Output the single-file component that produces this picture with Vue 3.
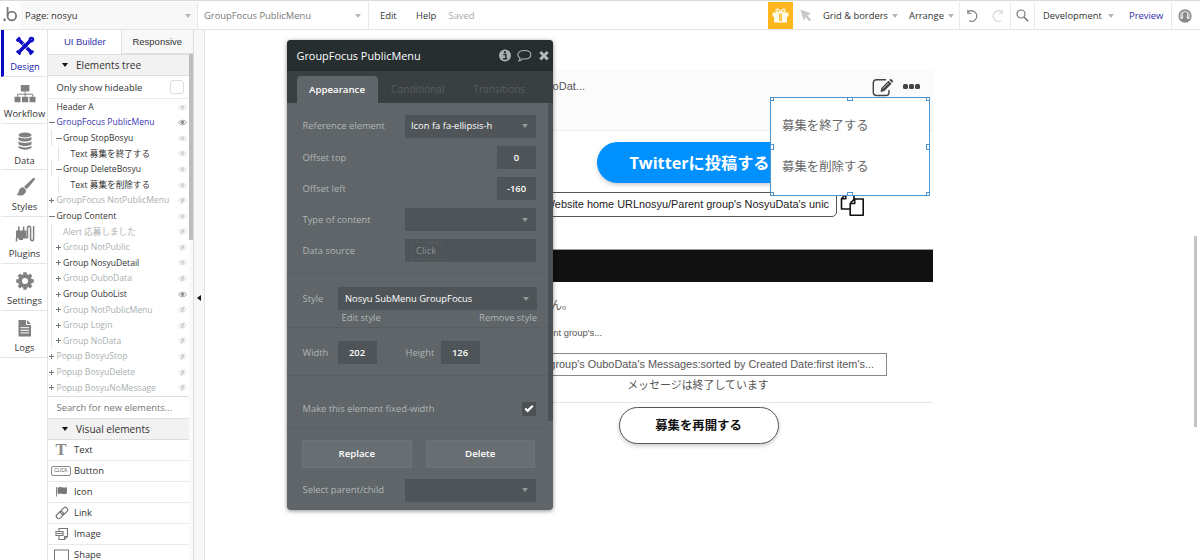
<script setup>
import { ref } from 'vue';

const navItems = ['Design', 'Workflow', 'Data', 'Styles', 'Plugins', 'Settings', 'Logs'];
const activeNav = ref('Design');

// level: indentation, mark: expand state, eye: on / dim / off
const tree = [
  { text: 'Header A', level: 0, mark: '', eye: 'dim', tone: 'dark' },
  { text: 'GroupFocus PublicMenu', level: 0, mark: 'minus', eye: 'on', tone: 'selected' },
  { text: 'Group StopBosyu', level: 1, mark: 'minus', eye: 'dim', tone: 'dark' },
  { text: 'Text 募集を終了する', level: 2, mark: '', eye: 'dim', tone: 'dark' },
  { text: 'Group DeleteBosyu', level: 1, mark: 'minus', eye: 'dim', tone: 'dark' },
  { text: 'Text 募集を削除する', level: 2, mark: '', eye: 'dim', tone: 'dark' },
  { text: 'GroupFocus NotPublicMenu', level: 0, mark: 'plus', eye: 'off', tone: 'muted' },
  { text: 'Group Content', level: 0, mark: 'minus', eye: 'dim', tone: 'dark' },
  { text: 'Alert 応募しました', level: 1, mark: '', eye: 'off', tone: 'muted' },
  { text: 'Group NotPublic', level: 1, mark: 'plus', eye: 'off', tone: 'muted' },
  { text: 'Group NosyuDetail', level: 1, mark: 'plus', eye: 'dim', tone: 'dark' },
  { text: 'Group OuboData', level: 1, mark: 'plus', eye: 'off', tone: 'muted' },
  { text: 'Group OuboList', level: 1, mark: 'plus', eye: 'on', tone: 'dark' },
  { text: 'Group NotPublicMenu', level: 1, mark: 'plus', eye: 'off', tone: 'muted' },
  { text: 'Group Login', level: 1, mark: 'plus', eye: 'off', tone: 'muted' },
  { text: 'Group NoData', level: 1, mark: 'plus', eye: 'off', tone: 'muted' },
  { text: 'Popup BosyuStop', level: 0, mark: 'plus', eye: 'off', tone: 'muted' },
  { text: 'Popup BosyuDelete', level: 0, mark: 'plus', eye: 'off', tone: 'muted' },
  { text: 'Popup BosyuNoMessage', level: 0, mark: 'plus', eye: 'off', tone: 'muted' }
];

const visuals = ['Text', 'Button', 'Icon', 'Link', 'Image', 'Shape'];
const handles = ['tl', 'tc', 'tr', 'ml', 'mr', 'bl', 'bc', 'br'];
const fixedWidth = ref(true);
</script>

<template>
  <div class="editor">
    <header class="topbar">
      <div class="logo">
        <svg width="20" height="27" viewBox="0 0 20 27">
          <circle cx="4.6" cy="17.800" r="1.400" fill="#777" />
          <path d="M7.600 5v9" stroke="#777" stroke-width="1.700" fill="none" />
          <circle cx="11.800" cy="14" r="4.300" stroke="#777" stroke-width="1.800" fill="none" />
        </svg>
      </div>
      <div class="page-select">Page: nosyu<i class="caret"></i></div>
      <div class="element-select">GroupFocus PublicMenu<i class="caret"></i></div>
      <nav class="menu">
        <span class="edit">Edit</span>
        <span class="help">Help</span>
        <span class="saved">Saved</span>
      </nav>
      <div class="gift">
        <svg width="17" height="16" viewBox="0 0 17 16" fill="#fffbe8">
          <path d="M.5 4.500h16v4h-16zM2 8.500h13V14.500H2z" />
          <path d="M8.500 4.500C5 4.500 3.700 3.600 4 2.200 4.500.4 7 .5 8.500 4.500 10 .5 12.500.4 13 2.200c.3 1.400-1 2.300-4.500 2.300z" fill="none" stroke="#fffbe8" stroke-width="1.300" />
          <path d="M7.200 5.500h2.600v7.500H7.200z" fill="#fdb61c" />
          <path d="M8.100 6h.8v6.500h-.8z" opacity=".5" />
        </svg>
      </div>
      <div class="pointer">
        <svg width="12" height="13" viewBox="0 0 12 13"><path d="M.5.5l10.500 4-3.800 1.900 4 4.300-1.700 1.700-4.100-4.200L3.700 12z" fill="#c8c8c8" /></svg>
      </div>
      <div class="dropdown grid-menu">Grid &amp; borders<i class="caret"></i></div>
      <div class="dropdown arrange-menu">Arrange<i class="caret"></i></div>
      <div class="history">
        <svg width="14" height="14" viewBox="0 0 14 14"><path d="M3.400 2.700A5.300 5.300 0 1 1 4 11.800M2.800.8v3.400h3.400" fill="none" stroke="#777" stroke-width="1.100" /></svg>
        <svg width="14" height="14" viewBox="0 0 14 14"><path d="M10.600 2.700A5.300 5.300 0 1 0 10 11.800M11.200.8v3.400H7.800" fill="none" stroke="#d3d3d3" stroke-width="1.100" /></svg>
      </div>
      <div class="search">
        <svg width="13" height="13" viewBox="0 0 13 13" fill="none" stroke="#777"><circle cx="5" cy="5" r="4" stroke-width="1.200" /><path d="M8 8l4.200 4.200" stroke-width="1.600" /></svg>
      </div>
      <div class="dropdown dev-menu">Development<i class="caret"></i></div>
      <div class="preview">Preview</div>
      <div class="user">
        <svg width="14" height="14" viewBox="0 0 14 14"><circle cx="7" cy="7" r="6" fill="#fff" stroke="#888" stroke-width="1.300" /><path d="M2.300 11.300c.4-2 3.300-1.700 3.300-2.800C4.400 7.400 4 3 7 3s2.600 4.400 1.400 5.500c0 1.100 2.900.8 3.300 2.800C9 13.700 5 13.700 2.300 11.300z" fill="#888" /><path d="M2 9.500C0 3 4 1 7 1s7 2 5 8.500C11 8.300 9.700 8.500 9.300 8 10.500 6 10 2.500 7 2.500S3.500 6 4.700 8C4.300 8.500 3 8.300 2 9.500z" fill="#888" opacity=".55" /></svg>
      </div>
    </header>

    <div class="workspace">
      <aside class="nav">
        <div v-for="item in navItems" :key="item" class="nav-item" :class="{ active: item === activeNav }" @click="activeNav = item">
          <svg width="22" height="22" viewBox="0 0 22 22">
            <g v-if="item === 'Design'" stroke="#0d0dc8" fill="none">
              <path d="M4.500 4.500l13 13M17.500 4.500l-13 13" stroke-width="3.400" />
              <path d="M2.500 6L6 2.500M2.800 15.800l3.600 3.600M15.800 19.300l3.500-3.500" stroke-width="2.600" />
              <circle cx="17.400" cy="4.600" r="1.700" stroke-width="2.200" />
              <path d="M7.800 10.500l2.500-2.500M11.700 13.800l2.500-2.500" stroke="#fff" stroke-width=".9" />
            </g>
            <g v-else-if="item === 'Workflow'" fill="#808080">
              <path d="M6.800 2h8.600v6.500H6.800zM.500 13.700h6v5.600h-6zM8 13.700h6.200v5.600H8zM15.500 13.700h6v5.600h-6z" />
              <path d="M11.100 8.500v5M3.700 13.700v-2.500h15v2.500" fill="none" stroke="#808080" />
            </g>
            <g v-else-if="item === 'Data'" fill="#808080">
              <ellipse cx="11" cy="5" rx="6.500" ry="2.600" />
              <path d="M4.500 6.800c2 2.100 11 2.100 13 0v3c-2 2.400-11 2.400-13 0zM4.500 11.300c2 2.100 11 2.100 13 0v3c-2 2.400-11 2.400-13 0zM4.500 15.800c2 2.100 11 2.100 13 0v1.800c-2 2.800-11 2.800-13 0z" />
            </g>
            <g v-else-if="item === 'Styles'" fill="#808080">
              <path d="M20.500 2c1 .8.300 2-3.800 6.700l-4.200 4.500-2.500-2.500 4.700-4.500C18.500 2.800 19.700 1.400 20.500 2z" />
              <path d="M9.300 11.300l2.700 2.600c0 4.400-3.300 6.600-9.800 5.200 2.700-1.200 2-3.600 3.600-6 .9-1.300 2.300-1.900 3.500-1.800z" />
            </g>
            <g v-else-if="item === 'Plugins'" fill="#808080">
              <path d="M2 7.500h10.500v8H9V17H5v-1.500H2zM4 3.500h1.600V8H4zM8.800 3.500h1.600V8H8.800z" />
              <path d="M2.500 18.500V15M12 14.500h1.500V5.300c0-2.700 3.100-2.700 3.100 0v10.500c0 2.500 3 2.500 3 0V3" fill="none" stroke="#808080" stroke-width="1.500" />
            </g>
            <g v-else-if="item === 'Settings'">
              <circle cx="11" cy="11" r="5" fill="none" stroke="#808080" stroke-width="4" />
              <path d="M11 2.200v3M11 16.800v3M2.200 11h3M16.800 11h3M4.800 4.800l2.200 2.200M15 15l2.200 2.200M17.200 4.800L15 7M7 15l-2.200 2.200" stroke="#808080" stroke-width="3.400" />
            </g>
            <g v-else>
              <path d="M4.500 3h7.500v5H17v11.500H4.500zM13 3l4 4h-4z" fill="#808080" />
              <path d="M6.500 10.700h8.500M6.500 13.300h8.500M6.500 15.900h8.500" stroke="#fff" stroke-width="1" />
            </g>
          </svg>
          <span>{{ item }}</span>
        </div>
      </aside>

      <section class="panel">
        <div class="panel-tabs">
          <div class="panel-tab current">UI Builder</div>
          <div class="panel-tab">Responsive</div>
        </div>
        <div class="panel-body">
          <div class="panel-list">
            <div class="group-title"><i class="fold"></i>Elements tree</div>
            <div class="hideable">Only show hideable<i class="box"></i></div>
            <div class="tree">
              <div v-for="(row, index) in tree" :key="index" class="tree-row" :class="[row.tone, 'level-' + row.level]">
                <span class="mark" :class="row.mark"></span>
                <span class="tree-text">{{ row.text }}</span>
                <svg class="eye" :class="row.eye" width="9" height="7" viewBox="0 0 9 7">
                  <path d="M.4 3.500C2.400.6 6.600.6 8.600 3.500 6.600 6.400 2.400 6.400.4 3.500z" fill="none" stroke="currentColor" stroke-width=".8" />
                  <circle cx="4.500" cy="3.300" r="1.600" fill="currentColor" />
                  <path v-if="row.eye === 'off'" d="M6.200.3L3 6.800" stroke="currentColor" stroke-width=".9" />
                </svg>
              </div>
            </div>
            <div class="search-new">Search for new elements...</div>
            <div class="group-title visual-title"><i class="fold"></i>Visual elements</div>
            <div v-for="item in visuals" :key="item" class="visual">
              <span v-if="item === 'Text'" class="glyph-t">T</span>
              <span v-else-if="item === 'Button'" class="glyph-click">CLICK</span>
              <svg v-else width="16" height="14" viewBox="0 0 16 14">
                <path v-if="item === 'Icon'" d="M2.500 2v9.500M4 3c3-1.500 5 1 8.500-.3v5.500C9 9.700 7 7.200 4 8.500z" fill="#777" stroke="#777" stroke-width=".9" />
                <g v-else-if="item === 'Link'" fill="none" stroke="#777" stroke-width="1.200" transform="rotate(-45 8 7)">
                  <rect x="1" y="4.600" width="8" height="4.800" rx="2.400" /><rect x="7" y="4.600" width="8" height="4.800" rx="2.400" />
                </g>
                <g v-else-if="item === 'Image'" fill="none" stroke="#777" stroke-width="1.100">
                  <path d="M5 4V1.500h8.500v8L10.500 12.500H5V9M13.500 9.500h-3v3" /><path d="M2 4.500h7v4H2zM3 6.500h5" stroke-width="1.200" />
                </g>
                <rect v-else x=".5" y="2" width="14" height="13" fill="none" stroke="#777" />
              </svg>
              <span>{{ item }}</span>
            </div>
          </div>
          <div class="panel-scroll"><div class="panel-thumb"></div></div>
        </div>
      </section>
      <div class="collapse"><i></i></div>

      <main class="canvas">
        <div class="page">
          <div class="page-head">
            <span class="head-text">OuboDat...</span>
            <svg class="edit-icon" width="22" height="19" viewBox="0 0 22 19">
              <path d="M14 1.700H4.500C2.500 1.700 1.300 2.700 1.300 4.700v9.800c0 2 1.200 3 3.200 3h9.300c2 0 3.200-1 3.200-3v-2.500" fill="none" stroke="#444" stroke-width="1.400" />
              <path d="M8.500 14l.8-4L16.500 2.800l3 3L12.400 13zM17.300 2l1-1c.7-.6 3.300 1.900 2.700 2.700l-1 1z" fill="#444" />
              <path d="M11 10.500L16.500 5" stroke="#fff" stroke-width=".7" />
            </svg>
            <span class="dots"><i></i><i></i><i></i></span>
          </div>
          <button class="twitter">Twitterに投稿する</button>
          <div class="url-row">
            <div class="url"><span>Website home URLnosyu/Parent group's NosyuData's unic</span></div>
            <svg width="25" height="25" viewBox="0 0 25 25" fill="#fff" stroke="#111" stroke-width="1.600" stroke-linejoin="round">
              <path d="M5.800 2H14v15H1.500V6.800z" /><path d="M5.800 2v4.800H1.500" fill="none" />
              <path d="M14.300 7h8.900v16.200H10.200V11.500z" /><path d="M14.700 7v4.500h-4.500" fill="none" />
            </svg>
          </div>
          <div class="black-bar"></div>
          <div class="line-n">せん。</div>
          <div class="line-group">Parent group's...</div>
          <div class="message-box">group's OuboData's Messages:sorted by Created Date:first item's...</div>
          <div class="message-end">メッセージは終了しています</div>
          <button class="reopen">募集を再開する</button>
        </div>

        <!-- 選択中のサブメニュー -->
        <div class="submenu">
          <span>募集を終了する</span>
          <span>募集を削除する</span>
          <i v-for="h in handles" :key="h" class="handle" :class="h"></i>
        </div>
        <div class="canvas-thumb"></div>
      </main>
    </div>

    <!-- プロパティエディタ -->
    <div class="props">
      <div class="props-title">
        <span>GroupFocus PublicMenu</span>
        <svg width="52" height="14" viewBox="0 0 52 14">
          <circle cx="7" cy="6.500" r="6" fill="#a9b0b2" />
          <path d="M5.300 5.500h2.500v4.200M5 9.800h4.200" stroke="#272e30" stroke-width="1.500" fill="none" /><circle cx="7" cy="3.200" r="1.100" fill="#272e30" />
          <path d="M26.500 1.500c8.500 0 8.500 8.500 0 8.500-.8 0-1.500 0-2.200-.2-.9 1-2 1.700-3.300 1.900.8-.9 1-1.800 1-2.700-4.200-2.600-2-7.500 4.500-7.500z" fill="none" stroke="#a9b0b2" stroke-width="1.100" />
          <path d="M42.300 3l7.400 7.400M49.700 3l-7.400 7.400" stroke="#b4babc" stroke-width="2.900" />
        </svg>
      </div>
      <div class="props-tabs">
        <span class="on">Appearance</span>
        <span class="conditional">Conditional</span>
        <span class="transitions">Transitions</span>
      </div>
      <div class="props-body">
        <div class="sections">
          <div class="section first">
            <div class="field-row"><label>Reference element</label><div class="field wide">Icon fa fa-ellipsis-h<i class="caret"></i></div></div>
            <div class="field-row"><label>Offset top</label><div class="field num">0</div></div>
            <div class="field-row"><label>Offset left</label><div class="field num">-160</div></div>
            <div class="field-row"><label>Type of content</label><div class="field wide"><i class="caret"></i></div></div>
            <div class="field-row"><label>Data source</label><div class="field wide"><span class="click">Click</span></div></div>
          </div>
          <div class="section style-section">
            <div class="field-row"><label>Style</label><div class="field style-field">Nosyu SubMenu GroupFocus<i class="caret"></i></div></div>
            <div class="links"><span>Edit style</span><span>Remove style</span></div>
          </div>
          <div class="section size-section">
            <label class="w-label">Width</label><div class="field num">202</div>
            <label class="h-label">Height</label><div class="field num">126</div>
          </div>
          <div class="section fixed-section">
            <label>Make this element fixed-width</label>
            <div class="check" @click="fixedWidth = !fixedWidth">
              <svg v-if="fixedWidth" width="10" height="9" viewBox="0 0 10 9"><path d="M1.200 4.500l2.400 2.400L8.800 1.700" fill="none" stroke="#fff" stroke-width="2.200" /></svg>
            </div>
          </div>
          <div class="section last">
            <div class="buttons"><button>Replace</button><button>Delete</button></div>
            <div class="field-row"><label>Select parent/child</label><div class="field wide"><i class="caret"></i></div></div>
          </div>
        </div>
        <div class="props-thumb"></div>
      </div>
    </div>
  </div>
</template>

<style>
body {
  overflow: hidden;
}
</style>

<style scoped>
* {
  box-sizing: border-box;
}

.editor {
  position: relative;
  width: 1200px;
  height: 560px;
  overflow: hidden;
  background: #fff;
  color: #333;
  font-family: "Open Sans", "Noto Sans CJK JP", sans-serif;
  font-size: 9.4px;
  line-height: 1.2;
  white-space: nowrap;
}

button {
  padding: 0;
  font-family: inherit;
}

.caret {
  width: 0;
  height: 0;
  border: 3.5px solid transparent;
  border-top: 4px solid #b5b9bb;
  border-bottom: 0;
}

/* トップバー */
.topbar {
  display: flex;
  height: 30px;
  padding-top: 1px;
  border-top: 1px solid #d5dddb;
  border-bottom: 1px solid #e4e4e4;
}

.topbar > div {
  display: flex;
  align-items: center;
}

.logo {
  width: 20px;
}

.page-select {
  width: 178px;
  padding: 0 6px 0 5px;
  justify-content: space-between;
  background: #f8f8f8;
  border-right: 1px solid #e8e8e8;
}

.element-select {
  width: 171px;
  padding: 0 7px 0 6px;
  justify-content: space-between;
  color: #777;
  border-right: 1px solid #e8e8e8;
}

.menu {
  display: flex;
  align-items: center;
  width: 399px;
  padding-left: 11px;
}

.menu span {
  width: 36px;
}

.menu .help {
  width: 32.5px;
}

.menu .saved {
  color: #aaa;
}

.gift {
  width: 25px;
  justify-content: center;
  background: #fdb61c;
}

.pointer {
  width: 30px;
  padding-left: 7px;
}

.dropdown {
  justify-content: space-between;
}

.grid-menu {
  width: 75px;
}

.arrange-menu {
  width: 62px;
  padding: 0 5px 0 11px;
  border-right: 1px solid #eaeaea;
}

.history {
  width: 51px;
  padding: 0 5px 0 5px;
  justify-content: space-between;
  border-right: 1px solid #eaeaea;
}

.search {
  width: 24px;
  justify-content: center;
  border-right: 1px solid #eaeaea;
}

.dev-menu {
  width: 79px;
  padding-left: 8px;
}

.preview {
  width: 58px;
  padding-left: 15px;
  color: #2d2dae;
  border-right: 1px solid #eaeaea;
}

.user {
  padding-left: 6px;
}

.workspace {
  display: flex;
  height: 530px;
}

/* 左ナビ */
.nav {
  width: 48px;
  border-right: 1px solid #e3e3e3;
}

.nav-item {
  display: flex;
  flex-direction: column;
  align-items: center;
  height: 46.8px;
  padding: 6px 0 0 1px;
  margin-left: 1px;
  border-bottom: 1px solid #e4e4e4;
}

.nav-item span {
  margin-top: 3px;
}

.nav-item.active {
  padding: 5px 1px 0 0;
  color: #2020b0;
  border-left: 3px solid #0a0ac0;
}

.nav-item.active span {
  margin-top: 4px;
}

/* エレメントパネル */
.panel {
  width: 146px;
  border-right: 1px solid #dedede;
}

.panel-tabs {
  display: flex;
  height: 24px;
  font-family: "Liberation Sans", sans-serif;
  font-size: 9.5px;
}

.panel-tab {
  display: flex;
  align-items: center;
  justify-content: center;
  width: 73px;
  background: #f8f8f8;
  border-bottom: 1px solid #e0e0e0;
  border-left: 1px solid #e0e0e0;
}

.panel-tab.current {
  color: #3333b0;
  background: #fff;
  border-color: transparent;
}

.panel-body {
  display: flex;
  height: 506px;
  overflow: hidden;
}

.panel-list {
  width: 141px;
}

.panel-scroll {
  width: 4px;
  background: #fafafa;
}

.panel-thumb {
  height: 186px;
  background: #bdbdbd;
}

.group-title {
  display: flex;
  align-items: center;
  height: 22px;
  padding-left: 14px;
  font-size: 10.1px;
  background: #f2f2f2;
  border-top: 1px solid #dedede;
  border-bottom: 1px solid #dedede;
}

.visual-title {
  height: 21.5px;
}

.fold {
  margin-right: 8px;
  border: 3.5px solid transparent;
  border-top: 4px solid #111;
  border-bottom: 0;
}

.hideable {
  display: flex;
  align-items: center;
  justify-content: space-between;
  height: 23px;
  padding: 1px 5px 0 8.5px;
  border-bottom: 1px solid #ececec;
}

.box {
  width: 14px;
  height: 14px;
  margin-top: -1px;
  border: 1px solid #dcdcdc;
  border-radius: 3px;
}

.tree {
  height: 298px;
  font-size: 8.6px;
  border-bottom: 1px solid #ddd;
}

.tree-row {
  display: flex;
  align-items: center;
  height: 15.6px;
  padding: 0.5px 2px 0 1px;
}

.level-1 {
  margin-left: 3px;
  padding-left: 4px;
  border-left: 1px solid #e6e6e6;
}

.level-2 {
  margin-left: 10px;
  padding-left: 5.5px;
  border-left: 1px solid #e6e6e6;
}

.mark {
  position: relative;
  flex: none;
  width: 7.5px;
  height: 7px;
}

.level-1 .mark {
  width: 7px;
}

.level-2 .mark {
  width: 6px;
}

.mark.minus::before,
.mark.plus::before {
  content: '';
  position: absolute;
  top: 3px;
  left: 0;
  width: 6px;
  height: 1px;
  background: #777;
}

.mark.plus::before {
  width: 5px;
  box-shadow: 0 0 0.5px #777;
}

.mark.plus::after {
  content: '';
  position: absolute;
  top: 1px;
  left: 2px;
  width: 1px;
  height: 5px;
  background: #777;
  box-shadow: 0 0 0.5px #777;
}

.tree-text {
  flex: 1;
}

.selected .tree-text {
  color: #3a34b4;
}

.muted .tree-text {
  color: #a9b0b0;
}

.eye {
  color: #cfcfcf;
}

.eye.on {
  color: #858585;
}

.search-new {
  display: flex;
  align-items: center;
  height: 21px;
  padding: 1px 0 0 8.5px;
  color: #777;
}

.visual {
  display: flex;
  align-items: center;
  height: 21.1px;
  padding-left: 3px;
  border-bottom: 1px solid #e8e8e8;
}

.visual > :first-child {
  flex: none;
  margin-left: 3px;
  margin-right: 4px;
}

.visual > .glyph-t {
  width: 16px;
  padding-left: 1.5px;
  font: bold 16.5px/18px "Liberation Serif", serif;
  color: #888;
}

.visual > .glyph-click {
  width: 20px;
  height: 10px;
  margin-left: 0;
  margin-right: 3px;
  font: 4.5px/8.5px "Liberation Sans", sans-serif;
  text-align: center;
  color: #555;
  border: 1px solid #888;
  border-radius: 2px;
}

.collapse {
  display: flex;
  align-items: center;
  justify-content: center;
  width: 11px;
  padding-top: 6px;
  background: #f8f8f8;
  border-right: 1px solid #e2e2e2;
}

.collapse i {
  border: 3.5px solid transparent;
  border-right: 4px solid #111;
  border-left: 0;
}

/* キャンバス */
.canvas {
  position: relative;
  flex: 1;
}

.page {
  display: flex;
  flex-direction: column;
  width: 469px;
  margin: 40px 0 0 259px;
  font-family: "Liberation Sans", "Noto Sans CJK JP", sans-serif;
  color: #555;
}

.page-head {
  display: flex;
  height: 61px;
  padding: 8px 13px 0 0;
  background: #fbfbfb;
  border-bottom: 1px solid #ececec;
}

.head-text {
  width: 121px;
  padding-top: 2px;
  font-size: 11px;
  text-align: right;
}

.edit-icon {
  margin-left: 287px;
}

.dots {
  display: flex;
  gap: 1.5px;
  margin: 6px 0 0 auto;
}

.dots i {
  width: 4.6px;
  height: 4.6px;
  background: #444;
  border-radius: 1.5px;
}

.twitter {
  align-self: center;
  width: 203px;
  height: 41px;
  margin-top: 11px;
  padding: 0 0 2px 2px;
  font: bold 16.2px "Open Sans", "Noto Sans CJK JP", sans-serif;
  color: #fff;
  background: #0091ff;
  border: 0;
  border-radius: 21px;
  box-shadow: 0 2px 4px rgba(0, 0, 0, 0.2);
}

.url-row {
  display: flex;
  height: 25px;
  margin-top: 9px;
}

.url {
  display: flex;
  align-items: center;
  justify-content: flex-end;
  width: 373px;
  margin-right: 3px;
  padding-right: 7px;
  font-size: 10.9px;
  color: #222;
  border: 1px solid #555;
  border-radius: 5px;
}

.black-bar {
  height: 33px;
  margin-top: 32px;
  background: #111;
  border-top: 1px solid #999;
}

.line-n {
  width: 109px;
  height: 16px;
  margin-top: 15px;
  font-size: 11px;
  line-height: 16px;
  text-align: right;
}

.line-group {
  width: 138px;
  height: 14px;
  margin-top: 13px;
  font-size: 9.4px;
  line-height: 14px;
  text-align: right;
}

.message-box {
  width: 423px;
  height: 23px;
  margin-top: 13px;
  padding-right: 12px;
  font-size: 10.9px;
  line-height: 20px;
  text-align: right;
  border: 1px solid #888;
}

.message-end {
  height: 27px;
  padding-right: 1px;
  font-size: 10.95px;
  line-height: 18px;
  text-align: center;
  border-bottom: 1px solid #e5e5e5;
}

.reopen {
  align-self: center;
  width: 160px;
  height: 37px;
  margin-top: 4px;
  padding-bottom: 2px;
  font: bold 12.4px "Noto Sans CJK JP", sans-serif;
  color: #111;
  background: #fff;
  border: 1px solid #555;
  border-radius: 19px;
  box-shadow: 0 2px 4px rgba(0, 0, 0, 0.2);
}

.submenu {
  position: absolute;
  top: 67px;
  left: 565px;
  display: flex;
  flex-direction: column;
  gap: 23px;
  width: 160px;
  height: 99px;
  padding: 17.5px 0 0 11px;
  font: 12.4px/18px "Noto Sans CJK JP", sans-serif;
  color: #666;
  background: #fff;
  border: 1px solid #4d93cd;
}

.handle {
  position: absolute;
  width: 4px;
  height: 4px;
  background: #fff;
  border: 1px solid #4d93cd;
}

.tl, .tc, .tr {
  top: -1px;
}

.bl, .bc, .br {
  bottom: -1px;
}

.ml, .mr {
  top: 46px;
  height: 6px;
}

.tl, .ml, .bl {
  left: -1px;
}

.tr, .mr, .br {
  right: -1px;
}

.tc, .bc {
  left: 76px;
  width: 6px;
}

.canvas-thumb {
  position: absolute;
  top: 206px;
  right: 3px;
  width: 3px;
  height: 191px;
  background: #c4c4c4;
}

/* プロパティエディタ */
.props {
  position: absolute;
  top: 40px;
  left: 287px;
  width: 265.5px;
  height: 469.5px;
  overflow: hidden;
  color: #fff;
  background: #5f6568;
  border-radius: 4px;
  box-shadow: 0 1px 4px rgba(0, 0, 0, 0.45);
}

.props-title {
  display: flex;
  align-items: center;
  justify-content: space-between;
  height: 31px;
  padding: 1px 3px 0 9.5px;
  font-size: 10.9px;
  background: #272e30;
}

.props-tabs {
  display: flex;
  height: 32px;
  padding: 5px 0 0 9.5px;
  line-height: 27px;
  color: #575d60;
  background: #3a4042;
}

.props-tabs .on {
  width: 81px;
  font-size: 9.7px;
  font-weight: 600;
  text-align: center;
  color: #fff;
  background: #5f6568;
  border-radius: 4px 4px 0 0;
}

.conditional {
  width: 82px;
  padding-left: 13.5px;
  font-size: 10px;
}

.transitions {
  padding-left: 14px;
  font-size: 10px;
}

.props-body {
  display: flex;
  height: 407px;
}

.sections {
  width: 261px;
}

.props-thumb {
  width: 4.5px;
  height: 318px;
  background: #4c5255;
}

.section {
  padding: 0 12px 0 15.5px;
  border-bottom: 1px solid #575d60;
}

.section label {
  color: #afb5b7;
}

.first {
  display: flex;
  flex-direction: column;
  gap: 8.2px;
  height: 171px;
  padding-top: 11.5px;
}

.field-row {
  display: flex;
  align-items: center;
  justify-content: space-between;
}

.field {
  display: flex;
  align-items: center;
  height: 23px;
  background: #4e5457;
}

.field .caret {
  margin-left: auto;
  border-top-color: #92989a;
}

.wide {
  width: 131px;
  padding: 0 8px 0 6px;
}

.num {
  justify-content: center;
  width: 39px;
  font-weight: 600;
}

.click {
  padding: 2px 6px 3px 4px;
  color: #8d9395;
  border: 1px dashed #565c5f;
}

.style-section {
  height: 54px;
  padding-top: 13px;
  padding-right: 11px;
}

.style-field {
  width: 199px;
  padding: 0 8px 0 7px;
}

.links {
  display: flex;
  justify-content: space-between;
  padding: 1.5px 0 0 39px;
  color: #afb5b7;
}

.size-section {
  display: flex;
  align-items: center;
  height: 48px;
  padding-top: 2px;
}

.w-label {
  width: 35px;
}

.h-label {
  width: 35px;
  margin-left: 29px;
}

.fixed-section {
  display: flex;
  align-items: center;
  justify-content: space-between;
  height: 52px;
  padding-top: 14px;
}

.check {
  display: flex;
  align-items: center;
  justify-content: center;
  width: 14px;
  height: 14px;
  background: #4a5053;
}

.last {
  padding-top: 11.5px;
  border: 0;
}

.buttons {
  display: flex;
  gap: 14px;
  margin: 0 0 11px -0.5px;
}

.buttons button {
  width: 109.5px;
  height: 28px;
  padding-bottom: 1px;
  font-size: 9.7px;
  font-weight: 600;
  color: #fff;
  background: #686e71;
  border: 1px solid #6d7376;
}
</style>
